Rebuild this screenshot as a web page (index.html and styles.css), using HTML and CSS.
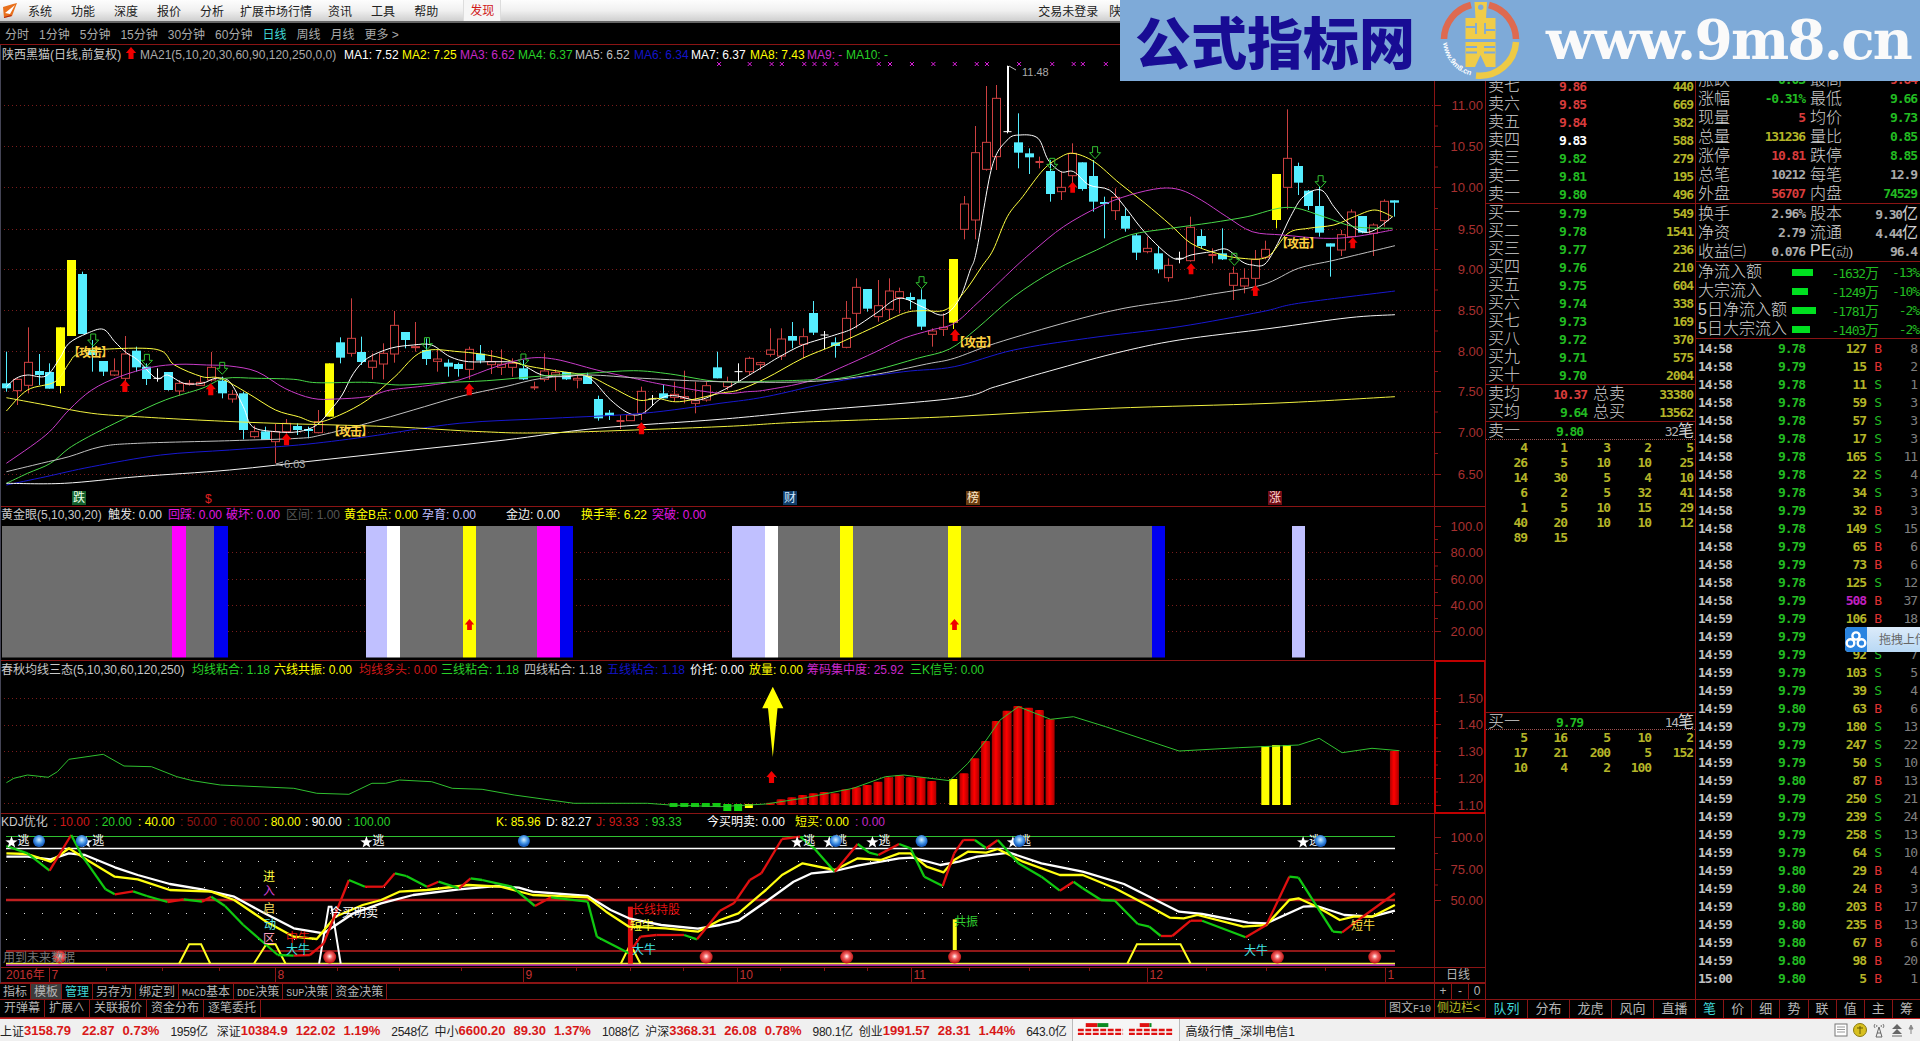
FILE: index.html
```html
<!DOCTYPE html>
<html lang="zh-CN">
<head>
    <meta charset="UTF-8">
    <title>陕西黑猫 日线</title>
    <link rel="stylesheet" href="styles.css">
</head>
<body>
    <div class="menubar">
        <svg class="app-logo" width="16" height="17" viewBox="0 0 16 17">
            <path d="M1 5 L11 2 L15 1 L13 6 L10 14 L2 16 Z" fill="#e8701c"/>
            <path d="M3 11 L13 3 L8 12 Z" fill="#fff"/>
            <path d="M2 15 L9 13 L10 14 L2 16 Z" fill="#b02810"/>
        </svg>
        <nav class="menu">
            <span>系统</span><span>功能</span><span>深度</span><span>报价</span><span>分析</span>
            <span class="wide">扩展市场行情</span><span>资讯</span><span>工具</span><span>帮助</span>
        </nav>
        <span class="discover">发现</span>
        <span class="login">交易未登录</span>
        <span class="stock">陕西黑猫</span>
    </div>

    <div class="periods">
        <span>分时</span><span>1分钟</span><span>5分钟</span><span>15分钟</span><span>30分钟</span><span>60分钟</span>
        <span class="on">日线</span><span>周线</span><span>月线</span><span>更多 &gt;</span>
    </div>

    <div class="workspace">
        <div class="left">
            <svg id="chart" width="1485" height="938" viewBox="0 45 1485 938"></svg>
            <div class="tabrow one">
                <span>指标</span><span class="sel">模板</span><span class="cy">管理</span><span>另存为</span><span>绑定到</span>
                <span><i>MACD</i>基本</span><span><i>DDE</i>决策</span><span><i>SUP</i>决策</span><span>资金决策</span>
                <div class="zoom"><span>+</span><span>-</span><span>0</span></div>
            </div>
            <div class="tabrow two">
                <span>开弹幕</span><span>扩展∧</span><span>关联报价</span><span>资金分布</span><span>逐笔委托</span>
                <div class="side"><span>图文<i>F10</i></span><span class="yl">侧边栏&lt;</span></div>
            </div>
        </div>

        <div class="book">
            <div id="asks" class="levels asks"></div>
            <div id="bids" class="levels"></div>
            <div class="levels avg">
                <div class="avg-row"><b>卖均</b><em class="red">10.37</em><b class="tail">总卖</b><em class="yel">33380</em></div>
                <div class="avg-row"><b>买均</b><em class="grn">9.64</em><b class="tail">总买</b><em class="yel">13562</em></div>
            </div>
            <div class="queue-head"><b>卖一</b><em class="grn">9.80</em><span>32<b>笔</b></span></div>
            <div id="sellq" class="queue"></div>
            <div class="queue-head lined"><b>买一</b><em class="grn">9.79</em><span>14<b>笔</b></span></div>
            <div id="buyq" class="queue"></div>
            <div class="tabrow bottom five">
                <span class="cy">队列</span><span>分布</span><span>龙虎</span><span>风向</span><span>直播</span>
            </div>
        </div>

        <div class="quote">
            <div id="q1" class="qblock first"></div>
            <div id="q2" class="qblock"></div>
            <div id="flows" class="qblock"></div>
            <div id="ticks"></div>
            <div class="tabrow bottom eight">
                <span class="cy">笔</span><span>价</span><span>细</span><span>势</span><span>联</span><span>值</span><span>主</span><span>筹</span>
            </div>
        </div>
    </div>

    <div class="statusbar">
        <div class="idx"><b>上证</b><em>3158.79</em><em>22.87</em><em>0.73%</em><span>1959亿</span></div>
        <div class="idx"><b>深证</b><em>10384.9</em><em>122.02</em><em>1.19%</em><span>2548亿</span></div>
        <div class="idx"><b>中小</b><em>6600.20</em><em>89.30</em><em>1.37%</em><span>1088亿</span></div>
        <div class="idx"><b>沪深</b><em>3368.31</em><em>26.08</em><em>0.78%</em><span>980.1亿</span></div>
        <div class="idx"><b>创业</b><em>1991.57</em><em>28.31</em><em>1.44%</em><span>643.0亿</span></div>
        <svg class="breadth" width="108" height="20" viewBox="0 0 108 20">
            <rect x="13" y="3" width="12" height="4" fill="#e01010"/>
            <rect x="25" y="3" width="11" height="4" fill="#0a8a20"/>
            <rect x="68" y="3" width="10" height="4" fill="#e01010"/>
            <rect x="78" y="3" width="2" height="4" fill="#0a8a20"/>
            <path d="M5 10 H51 M5 14 H51 M57 10 H102 M57 14 H102" stroke="#e01010" stroke-width="2.4" stroke-dasharray="6 1.6"/>
        </svg>
        <span class="server">高级行情_深圳电信1</span>
        <div class="tray">
            <svg width="14" height="14" viewBox="0 0 14 14"><rect x="1" y="1" width="12" height="12" fill="#fff" stroke="#777"/><path d="M3 4 H11 M3 6.5 H11 M3 9 H11" stroke="#999"/></svg>
            <svg width="14" height="14" viewBox="0 0 14 14"><circle cx="7" cy="7" r="6.5" fill="#d8c020" stroke="#8a7a10"/><path d="M4 5 H10 M7 3 V11" stroke="#665a00"/></svg>
            <svg width="14" height="16" viewBox="0 0 14 16"><path d="M7 5 L4 15 H10 Z M5 11 H9" fill="none" stroke="#666"/><path d="M3 2 Q1 4 3 6 M11 2 Q13 4 11 6 M5 3 Q4 4 5 5 M9 3 Q10 4 9 5" fill="none" stroke="#777"/></svg>
            <svg width="12" height="14" viewBox="0 0 12 14"><path d="M6 1 L11 6 H1 Z M6 6 L11 11 H1 Z" fill="#666"/><path d="M1 13 H11" stroke="#666"/></svg>
            <svg width="6" height="12" viewBox="0 0 6 12"><path d="M3 1 L5 5 H1 Z M3 5 V10" fill="#888" stroke="#888"/></svg>
        </div>
    </div>

    <!-- site banner over the top right corner -->
    <div class="banner">
        <span class="banner-title">公式指标网</span>
        <svg class="banner-logo" width="110" height="81" viewBox="0 0 110 81">
            <defs><path id="rim" d="M13 43 A37 37 0 0 0 41 75.5"/></defs>
            <path d="M14 39 A36 36 0 0 1 41 5 M59 5 A36 36 0 0 1 86 39" fill="none" stroke="#de6a50" stroke-width="6.5"/>
            <path d="M86 42 A36 36 0 0 1 46 75.5" fill="none" stroke="#eeca45" stroke-width="6.5"/>
            <text class="rim-text"><textPath href="#rim">www.9m8.cn</textPath></text>
            <path d="M44.5 2 H57 L56 18 H65.5 V39 H35.5 V18 H45.5 Z M35.5 42 H65.5 V67 H56 L50.5 55 L45 67 H35.5 Z" fill="#f0cc48"/>
            <circle cx="50.7" cy="7.3" r="2.7" fill="#7eaad8"/>
            <path d="M36 27 H46 M55 30 H65 M46 23 V34 M55 23 V34 M36 47 H47 M54 47 H65 M36 52.5 H47 M54 52.5 H65" stroke="#7eaad8" stroke-width="1.8"/>
        </svg>
        <span class="banner-url">www.9m8.cn</span>
    </div>

    <!-- upload helper docked on the screen edge -->
    <div class="dock">
        <div class="dock-icon">
            <svg width="22" height="18" viewBox="0 0 22 18">
                <circle cx="11" cy="5" r="3.6" fill="none" stroke="#fff" stroke-width="2.4"/>
                <circle cx="5.5" cy="12" r="3.8" fill="none" stroke="#fff" stroke-width="2.4"/>
                <circle cx="16.5" cy="12" r="3.8" fill="none" stroke="#fff" stroke-width="2.4"/>
            </svg>
        </div>
        <span>拖拽上传</span>
    </div>

    <script src="script.js"></script>
</body>
</html>
```

FILE: styles.css
```css
* { box-sizing: border-box; }
html, body {
    margin: 0;
    width: 1920px;
    height: 1041px;
    overflow: hidden;
    background: #000;
    color: #c8c8c8;
    font-family: "Liberation Sans", "Noto Sans CJK SC", sans-serif;
    font-size: 12px;
}
body { position: relative; }
em, i { font-style: normal; }
b { font-weight: normal; }

/* top menu */
.menubar {
    height: 23px;
    display: flex;
    align-items: center;
    color: #222;
    background: linear-gradient(#fdfdfd, #f0f0f0 50%, #cfcfcf);
    border-bottom: 2px solid #666;
}
.app-logo { margin: 0 10px 0 2px; }
.menu { display: flex; gap: 19px; }
.menu .wide { margin: 0 -3px; }
.discover {
    margin-left: 25px;
    height: 21px;
    line-height: 22px;
    padding: 0 6px;
    color: #d01818;
    background: #f6f6f6;
    border: 1px solid #ddd;
    border-width: 0 1px;
}
.login { margin-left: 537px; }
.stock { margin-left: 11px; }

.periods {
    height: 22px;
    display: flex;
    align-items: center;
    gap: 10px;
    padding-left: 5px;
    color: #aaa;
    border-bottom: 1px solid #8a1414;
}
.periods .on { color: #40d8d8; }

.workspace { height: 973px; display: flex; }
.left { width: 1485px; }
#chart { display: block; }
#chart text { font-size: 12px; }
#chart .axis { font-size: 13px; text-anchor: end; fill: #a83030; }
#chart .low { font-size: 11px; fill: #aaa; }
#chart .attack { fill: #ffd040; font-weight: bold; letter-spacing: -1px; }

/* tabs */
.tabrow {
    display: flex;
    align-items: stretch;
    color: #b4b4b4;
    border-bottom: 1px solid #8a1414;
}
.tabrow > span {
    padding: 0 3px;
    border-right: 1px solid #8a1414;
    line-height: 16px;
    white-space: nowrap;
}
.tabrow i { font-family: "Liberation Mono", monospace; font-size: 10px; }
.tabrow .sel { background: #3c3c3c; }
.tabrow .cy { color: #40d8d8; }
.tabrow.one { height: 17px; border-top: 1px solid #8a1414; }
.tabrow.two { height: 18px; }
.tabrow.two > span { padding: 0 4px; }
.zoom, .side { margin-left: auto; display: flex; }
.zoom { width: 51px; border-left: 1px solid #8a1414; }
.zoom span { flex: 1; text-align: center; line-height: 15px; border-right: 1px solid #8a1414; }
.zoom span:last-child { border: 0; }
.side span { padding: 0 3px; line-height: 17px; border-left: 1px solid #8a1414; }
.side .yl { width: 51px; padding: 0 0 0 2px; color: #b8b820; white-space: nowrap; overflow: hidden; }
.tabrow.bottom {
    margin-top: auto;
    height: 19px;
    border-top: 1px solid #8a1414;
    border-bottom: 0;
}
.tabrow.bottom > span { flex: 1; padding: 0; text-align: center; line-height: 17px; font-size: 13px; }
.tabrow.bottom > span:last-child { border-right: 0; }

/* order book */
.book {
    width: 211px;
    display: flex;
    flex-direction: column;
    border-left: 1px solid #8a1414;
    border-right: 1px solid #8a1414;
}
.levels { border-bottom: 1px solid #8a1414; }
.asks { padding-top: 32px; }
.level {
    height: 18px;
    display: grid;
    grid-template-columns: 71px 40px 1fr;
    align-items: center;
    padding: 0 2px;
}
.level b, .avg-row b, .queue-head b, .qrow b, .flow b { font-size: 16px; line-height: 18px; }
.level b, .avg-row b, .queue-head b, .qrow b, .flow b { color: #d0d0d0; font-weight: 300; white-space: nowrap; }
em, .queue span, .queue-head span, .tick span {
    font-family: "DejaVu Sans Mono", monospace;
    font-size: 13px;
    letter-spacing: -1.1px;
    font-weight: bold;
}
.level em:last-child { text-align: right; }
.red { color: #d83c3c; }
.wht { color: #fff; }
.grn { color: #22bb22; }
.yel { color: #b4b428; }
.gry { color: #aaa; }
.avg-row {
    height: 18px;
    display: grid;
    grid-template-columns: 53px 46px 48px 1fr;
    align-items: center;
    padding: 0 2px;
}
.avg-row em { text-align: right; }
.avg-row .tail { padding-left: 6px; }
.queue-head {
    height: 18px;
    display: grid;
    grid-template-columns: 68px 40px 1fr;
    align-items: center;
    padding: 0 2px;
    border-bottom: 1px dotted #a05050;
}
.queue-head span { text-align: right; color: #b4b4b4; font-weight: normal; }
.queue-head.lined { margin-top: 167px; border-top: 1px solid #8a1414; height: 18px; }
.queue-row {
    height: 15px;
    display: grid;
    grid-template-columns: 41px 40px 43px 41px 42px;
    align-items: center;
}
.queue-row span { text-align: right; color: #b4b428; }

/* quote column */
.quote { width: 224px; display: flex; flex-direction: column; }
.qblock { border-bottom: 1px solid #8a1414; }
.qblock.first { padding-top: 25px; }
.qrow {
    height: 19px;
    display: grid;
    grid-template-columns: 109px 1fr;
    align-items: center;
}
.qcell { display: flex; justify-content: space-between; align-items: center; padding: 0 0 0 2px; }
.qrow .qcell:last-child { padding: 0 3px 0 5px; }
.qrow small { font-size: 13px; }
.flow {
    height: 19px;
    display: grid;
    grid-template-columns: 94px 30px 56px 41px;
    align-items: center;
    padding-left: 2px;
}
.flow em { text-align: right; color: #22bb22; font-weight: normal; white-space: nowrap; }
.flow em small { font-family: "Noto Sans CJK SC", sans-serif; font-size: 14px; }
.flow .bar { height: 7px; background: #00e020; }
.tick {
    height: 18px;
    display: grid;
    grid-template-columns: 45px 62px 61px 15px 1fr;
    align-items: center;
    padding: 0 3px 0 2px;
}
.tick span { text-align: right; }
.tick .t { text-align: left; color: #c0c0c0; }
.tick .p { color: #22bb22; }
.tick .v { color: #b4b428; }
.tick .big-order { color: #c020c0; }
.tick .s { text-align: right; }
.tick .B { color: #e03232; font-weight: normal; }
.tick .S { color: #22bb22; font-weight: normal; }
.tick .n { color: #808080; font-weight: normal; }

/* status bar */
.statusbar {
    height: 23px;
    display: flex;
    align-items: center;
    color: #222;
    background: #f0f0f0;
    border-top: 1px solid #c02020;
    white-space: nowrap;
}
.idx { display: flex; align-items: center; gap: 8px; margin-right: 6px; }
.idx:first-child { margin-right: 9px; }
.idx:first-child em:first-of-type { margin-right: 3px; }
.idx b { margin-right: -8px; }
.idx em {
    font-family: "Liberation Sans", sans-serif;
    font-size: 13px;
    letter-spacing: 0;
    color: #d81818;
}
.idx span { font-size: 12px; margin-left: 3px; letter-spacing: -0.3px; }
.breadth { border: 1px solid #bbb; border-width: 0 1px; background: #f6f6f6; height: 22px; }
.server { margin-left: 5px; }
.tray { margin-left: auto; display: flex; align-items: center; gap: 5px; padding-right: 6px; }

/* banner */
.banner {
    position: absolute;
    top: 0;
    right: 0;
    width: 800px;
    height: 81px;
    background: #7eaad8;
    overflow: hidden;
}
.banner-title {
    position: absolute;
    left: 15px;
    top: 0;
    font: 900 56px/80px "Noto Sans CJK SC", sans-serif;
    color: #180c94;
    white-space: nowrap;
}
.banner-logo { position: absolute; left: 310px; top: 0; }
.rim-text { font-size: 7.5px; font-weight: bold; fill: #fff; font-family: "Liberation Sans", sans-serif; }
.banner-url {
    position: absolute;
    left: 426px;
    top: 0;
    font: bold 55px/80px "DejaVu Serif", serif;
    letter-spacing: -1.8px;
    color: #fafafa;
}

.dock {
    position: absolute;
    left: 1845px;
    top: 627px;
    width: 75px;
    height: 25px;
    display: flex;
    background: linear-gradient(#dcebfa, #b8d8f4);
    border-radius: 4px 0 0 4px;
    overflow: hidden;
}
.dock-icon {
    width: 30px;
    display: flex;
    align-items: center;
    justify-content: center;
    background: #2a84e0;
}
.dock span { padding: 0 0 0 12px; line-height: 27px; color: #666; white-space: nowrap; }
```

FILE: script.js
```js
// chart + quote panels, everything is drawn from the tables below
var out = [];

var RED = '#cc4040', CYAN = '#55eeff', YEL = '#ffff00', MAG = '#ff00ff';
var LINE = '#8a1414';

function X(i) { return 6.4 + 10.76 * i; }

function rect(x, y, w, h, c, extra) {
    out.push('<rect x="' + x + '" y="' + y + '" width="' + w + '" height="' + h + '" fill="' + c + '" ' + (extra || '') + '/>');
}
function hline(x1, x2, y, c, w, dash) {
    out.push('<path d="M' + x1 + ' ' + y + 'H' + x2 + '" stroke="' + c + '" stroke-width="' + (w || 1) + '"' +
        (dash ? ' stroke-dasharray="' + dash + '"' : '') + '/>');
}
function vline(x, y1, y2, c, w) {
    out.push('<path d="M' + x + ' ' + y1 + 'V' + y2 + '" stroke="' + c + '" stroke-width="' + (w || 1) + '"/>');
}
function text(x, y, c, s, cls) {
    out.push('<text x="' + x + '" y="' + y + '" fill="' + c + '" dominant-baseline="central"' +
        (cls ? ' class="' + cls + '"' : '') + '>' + s + '</text>');
}

// the point lists were read off crops, so each has its own origin and scale
function conv(list, ox, fx, oy) {
    var r = [];
    for (var i = 0; i < list.length; i += 2) r.push([ox + list[i] / fx, oy + list[i + 1] / 3]);
    return r;
}
function smooth(p, c, w) {
    var d = 'M' + p[0][0].toFixed(1) + ' ' + p[0][1].toFixed(1);
    for (var i = 0; i < p.length - 1; i++) {
        var a = p[Math.max(i - 1, 0)], b = p[i], e = p[i + 1], f = p[Math.min(i + 2, p.length - 1)];
        d += 'C' + (b[0] + (e[0] - a[0]) / 6).toFixed(1) + ' ' + (b[1] + (e[1] - a[1]) / 6).toFixed(1) + ' ' +
            (e[0] - (f[0] - b[0]) / 6).toFixed(1) + ' ' + (e[1] - (f[1] - b[1]) / 6).toFixed(1) + ' ' +
            e[0].toFixed(1) + ' ' + e[1].toFixed(1);
    }
    out.push('<path d="' + d + '" fill="none" stroke="' + c + '" stroke-width="' + w + '"/>');
}
function poly(p, c, w) {
    var s = p.map(function (q) { return q[0].toFixed(1) + ',' + q[1].toFixed(1); }).join(' ');
    out.push('<polyline points="' + s + '" fill="none" stroke="' + c + '" stroke-width="' + w + '" stroke-linejoin="round"/>');
}

out.push('<defs>' +
    '<linearGradient id="bar-red"><stop offset="0" stop-color="#b00000"/><stop offset=".45" stop-color="#ff0000"/><stop offset="1" stop-color="#a80000"/></linearGradient>' +
    '<radialGradient id="ball-blue" cx=".5" cy=".4"><stop offset="0" stop-color="#d8f0ff"/><stop offset=".6" stop-color="#4a9ae8"/><stop offset="1" stop-color="#1a60c0"/></radialGradient>' +
    '<radialGradient id="ball-red" cx=".5" cy=".45"><stop offset="0" stop-color="#ffffff"/><stop offset=".45" stop-color="#f06060"/><stop offset="1" stop-color="#c01818"/></radialGradient>' +
    '</defs>');

// ---- frame ----
[105, 146, 187, 229, 269, 310, 351, 391, 432, 474].forEach(function (y) { hline(0, 1434, y + .5, '#7a1c1c', 1, '1 3'); });
[552, 579, 605, 631].forEach(function (y) { hline(0, 1434, y + .5, '#7a1c1c', 1, '1 3'); });
[698, 725, 751, 777, 803].forEach(function (y) { hline(0, 1434, y + .5, '#7a1c1c', 1, '1 3'); });
[506.5, 660.5, 813.5, 967.5].forEach(function (y) { hline(0, 1485, y, LINE); });
hline(0, 1485, 982.5, LINE);
vline(.5, 45, 983, '#445');
vline(1434.5, 45, 983, LINE);

// ---- titles ----
[
    [2, 55, '#c8c8c8', '陕西黑猫(日线,前复权)'], [140, 55, '#aaa', 'MA21(5,10,20,30,60,90,120,250,0,0)'],
    [344, 55, '#fff', 'MA1: 7.52'], [402, 55, '#ff0', 'MA2: 7.25'], [460, 55, '#c828c8', 'MA3: 6.62'], [518, 55, '#28d028', 'MA4: 6.37'],
    [575, 55, '#c0c0c0', 'MA5: 6.52'], [634, 55, '#1414c8', 'MA6: 6.34'], [691, 55, '#fff', 'MA7: 6.37'], [750, 55, '#ff0', 'MA8: 7.43'],
    [807, 55, '#c828c8', 'MA9: -'], [846, 55, '#28d028', 'MA10: -'],

    [1, 515, '#c8c8c8', '黄金眼(5,10,30,20)'], [108, 515, '#e0e0e0', '触发: 0.00'], [168, 515, '#e018e0', '回踩: 0.00'], [226, 515, '#e018e0', '破坏: 0.00'],
    [286, 515, '#555', '区间: 1.00'], [344, 515, '#ff0', '黄金B点: 0.00'], [422, 515, '#c0c0ff', '孕育: 0.00'], [506, 515, '#f0f0f0', '金边: 0.00'],
    [581, 515, '#ff0', '换手率: 6.22'], [652, 515, '#e018e0', '突破: 0.00'],

    [1, 670, '#c8c8c8', '春秋均线三态(5,10,30,60,120,250)'], [192, 670, '#28d028', '均线粘合: 1.18'], [274, 670, '#ff0', '六线共振: 0.00'], [359, 670, '#d01818', '均线多头: 0.00'],
    [441, 670, '#28d028', '三线粘合: 1.18'], [524, 670, '#c0c0c0', '四线粘合: 1.18'], [607, 670, '#1414c8', '五线粘合: 1.18'], [690, 670, '#fff', '价托: 0.00'],
    [749, 670, '#ff0', '放量: 0.00'], [807, 670, '#c828c8', '筹码集中度: 25.92'], [910, 670, '#28d028', '三K信号: 0.00'],

    [1, 822, '#c8c8c8', 'KDJ优化'], [53, 822, '#d01818', ': 10.00'], [95, 822, '#28d028', ': 20.00'], [138, 822, '#ff0', ': 40.00'], [180, 822, '#901414', ': 50.00'],
    [223, 822, '#901414', ': 60.00'], [264, 822, '#ff0', ': 80.00'], [305, 822, '#fff', ': 90.00'], [347, 822, '#28d028', ': 100.00'],
    [496, 822, '#ff0', 'K: 85.96'], [546, 822, '#fff', 'D: 82.27'], [596, 822, '#d01818', 'J: 93.33'], [645, 822, '#28d028', ': 93.33'],
    [707, 822, '#fff', '今买明卖: 0.00'], [795, 822, '#ff0', '短买: 0.00'], [855, 822, '#c828c8', ': 0.00']
].forEach(function (t) { text(t[0], t[1], t[2], t[3]); });

// ---- axis ----
function axis(rows) {
    rows.forEach(function (r, i) {
        text(1483, r[0], '', r[1], 'axis');
        hline(1434, 1441, r[0] + .5, LINE);
        if (rows[i + 1]) hline(1434, 1438, (r[0] + rows[i + 1][0]) / 2 + .5, LINE);
    });
}
axis([[105, '11.00'], [146, '10.50'], [187, '10.00'], [229, '9.50'], [269, '9.00'], [310, '8.50'], [351, '8.00'], [391, '7.50'], [432, '7.00'], [474, '6.50']]);
axis([[526, '100.0'], [552, '80.00'], [579, '60.00'], [605, '40.00'], [631, '20.00']]);
axis([[698, '1.50'], [724, '1.40'], [751, '1.30'], [778, '1.20'], [805, '1.10']]);
axis([[837, '100.0'], [869, '75.00'], [900, '50.00']]);
out.push('<rect x="1435" y="661" width="50" height="152" fill="none" stroke="#c00000" stroke-width="2"/>');
text(1446, 975, '#b4b4b4', '日线');

// ---- candles: [high, body top, body bottom, low, kind], y in crop px ----
var c1 = [
    [305,400,415,425,'c'],[385,388,422,465,'r'],[232,337,406,430,'r'],[312,363,375,405,'c'],[340,366,416,416,'c'],
    [232,232,408,430,'y'],[30,30,258,258,'y'],[65,72,252,252,'c'],[270,300,315,365,'c'],[333,333,365,378,'c'],
    [325,363,375,378,'r'],[258,312,385,410,'r'],[290,302,352,365,'c'],[340,350,387,405,'c'],[355,385,386,395,'w'],
    [366,366,420,422,'c'],[390,400,423,437,'r'],[390,400,403,407,'r'],[378,397,406,408,'r'],[306,352,390,395,'r'],
    [380,392,430,445,'c'],[420,433,447,458,'r'],[425,430,540,568,'c'],[527,545,560,565,'r'],[530,544,570,570,'c'],
    [520,545,575,640,'r'],[507,520,545,550,'r'],[520,528,540,555,'c'],[530,537,543,565,'c'],[480,515,548,550,'r'],
    [340,340,500,500,'y'],[262,277,323,340,'c'],[145,265,310,320,'r'],[260,306,336,345,'c'],[310,333,352,388,'r'],
    [280,310,342,388,'r'],[183,226,312,338,'r'],[246,246,270,295,'c'],[216,290,293,305,'r'],[265,300,327,345,'c'],
    [300,327,334,365,'r'],[328,338,350,380,'c'],[338,342,357,380,'c'],[290,298,358,388,'r'],[285,311,332,340,'c'],
    [300,335,344,372,'r'],[298,343,352,375,'r'],[325,340,352,380,'r'],[330,355,388,390,'c'],[395,409,412,420,'s'],
    [310,363,388,395,'r'],[358,368,375,422,'r'],[366,366,388,390,'c'],[375,385,390,415,'r'],[368,378,402,402,'c'],
    [437,447,505,512,'c'],[480,488,498,510,'c'],[495,510,512,537,'s'],[490,495,512,512,'r'],[410,424,490,510,'r'],
    [435,447,448,465,'w'],[405,430,445,445,'c'],[395,433,442,455,'r'],[362,440,445,460,'r'],[395,452,460,490,'r'],
    [395,407,450,455,'r'],[305,352,385,385,'c'],[380,395,410,420,'r'],[340,365,366,398,'w'],[320,325,365,375,'r'],
    [335,338,344,360,'r'],[235,300,313,320,'r'],[235,267,318,330,'r'],[216,258,272,295,'c'],[235,260,283,325,'r'],
    [153,189,248,255,'c'],[243,255,256,297,'w'],[262,277,288,323,'c'],[153,205,292,295,'r'],[85,112,190,235,'r'],
    [117,117,176,185,'c'],[90,167,200,215,'r'],[85,123,178,210,'r'],[113,125,143,190,'r'],[128,141,150,178,'c'],
    [118,148,230,240,'c'],[235,243,253,290,'r'],[190,232,238,258,'r'],[27,27,218,237,'y']
];
var c2 = [
    [588,612,688,718,'r'],[378,458,660,718,'r'],[258,427,508,512,'r'],[255,295,470,510,'r'],[197,395,396,400,'w'],
    [340,427,458,505,'c'],[445,460,472,522,'c'],[470,483,487,505,'s'],[480,513,582,605,'c'],[515,562,575,600,'r'],
    [430,460,527,575,'r'],[487,487,567,572,'c'],[480,528,605,635,'c'],[590,606,610,715,'c'],[565,592,632,660,'r'],
    [625,648,686,695,'c'],[700,706,758,780,'c'],[710,745,755,760,'r'],[738,760,808,820,'c'],[775,796,833,845,'r'],
    [755,775,776,790,'w'],[650,682,782,785,'r'],[688,708,738,745,'c'],[745,762,766,790,'s'],[685,760,778,780,'c'],
    [800,820,856,900,'r'],[805,835,858,880,'r'],[750,778,835,860,'r'],[722,748,772,778,'r'],[522,522,660,685,'y'],
    [328,475,562,628,'r'],[488,498,548,585,'c'],[570,572,618,630,'c'],[560,618,698,710,'c'],[730,730,740,830,'c'],
    [690,704,750,768,'r'],[628,636,710,712,'r'],[648,648,698,700,'c'],[670,675,700,768,'r'],[598,604,662,680,'r'],
    [601,601,608,650,'c']
];
function candle(i, d, oy) {
    var x = Math.round(X(i)) + .5;
    var h = oy + d[0] / 3, t = oy + d[1] / 3, b = oy + d[2] / 3, l = oy + d[3] / 3, k = d[4];
    var col = k === 'r' || k === 's' ? RED : k === 'c' ? CYAN : k === 'y' ? YEL : '#fff';
    vline(x, h, l, col);
    if (k === 'r') rect(x - 4, t, 8, b - t, '#000', 'stroke="' + RED + '"');
    else if (k === 's') rect(x - 4, t, 8, Math.max(b - t, 2), RED);
    else if (k === 'c') rect(x - 4.5, t, 9, Math.max(b - t, 2), CYAN);
    else if (k === 'y') rect(x - 4.5, t, 9, b - t, YEL);
    else hline(x - 4, x + 4, t, col);
}
c1.forEach(function (d, i) { candle(i, d, 250); });
c2.forEach(function (d, i) { candle(i + 89, d, 0); });

// ---- moving averages ----
var ma = [
    ['#ffffff',
        [14,410,35,385,60,375,100,378,130,325,150,280,190,250,225,238,250,275,275,308,300,330,340,385,365,375,400,400,440,400,470,385,500,395,530,470,550,530,600,545,650,545,690,525,720,480,745,435,770,370,800,325,850,295,900,285,940,285,980,320,1020,335,1080,335,1130,340,1180,375,1230,380,1280,380,1330,450,1370,490,1400,490,1440,445,1470,437,1520,450],
        [0,425,40,395,100,345,130,320,180,285,250,255,290,235,340,190,390,145,440,170,485,195,520,150,545,60],
        [660,750,690,500,720,420,745,405,780,415,800,480,825,515,850,515,880,555,920,570,950,620,980,680,1010,730,1040,770,1058,778,1080,765,1120,755,1150,748,1180,785,1200,795,1225,792,1250,730,1275,650,1300,590,1335,570,1360,620,1385,665,1415,695,1440,690,1475,650]],
    ['#ffff40',
        [14,483,60,420,120,395,150,340,165,315,200,300,340,298,380,345,440,380,480,385,540,430,600,480,650,500,690,517,740,495,800,450,860,380,920,305,1000,305,1080,320,1140,345,1200,360,1280,378,1330,410,1390,450,1430,445,1480,455],
        [0,430,40,420,100,385,180,325,250,285,330,235,400,190,440,182,490,180,530,130,570,50],
        [692,750,720,650,750,590,790,510,820,475,848,460,890,485,940,550,990,610,1040,675,1080,730,1130,760,1180,775,1230,770,1270,700,1310,685,1360,675,1400,650,1440,630,1475,650]],
    ['#c83cc8',
        [14,640,100,555,150,480,200,420,260,380,330,352,390,343,450,345,500,348,560,365,620,415,680,445,730,447,800,440,850,420,930,407,1000,390,1080,350,1150,325,1210,328,1300,360,1380,385,1450,405],
        [0,430,60,425,100,420,190,395,260,355,340,305,400,265,460,240,510,220,560,160,640,55],
        [773,750,830,680,900,620,960,585,1020,565,1060,570,1100,600,1150,650,1200,695,1260,705,1340,715,1400,710,1475,690]],
    ['#48d848',
        [14,700,60,670,110,640,150,595,200,555,280,500,360,450,440,415,490,385,560,385,640,388,690,398,800,397,870,405,960,398,1060,392,1180,378,1280,370,1380,362,1460,372],
        [0,395,120,393,190,390,260,385,340,360,430,325,500,297,560,235,640,140,730,60],
        [895,750,960,705,1040,685,1120,668,1190,650,1270,622,1340,650,1400,680,1475,685]],
    ['#c0c0c0',
        [14,665,90,640,150,620,220,590,300,580,500,572,650,565,700,555,800,520,900,480,1000,440,1100,410,1180,385,1280,375,1400,385],
        [0,395,190,395,330,375,450,342,510,325,600,280,760,215,880,175,1000,150,1060,135,1180,105,1260,55,1340,30,1470,-13], []],
    ['#1818d0',
        [14,705,100,680,200,650,350,615,500,600,650,585,800,560,1000,520,1200,505,1400,490],
        [0,460,100,440,250,395,400,365,510,350,640,300,800,265,1000,230,1180,185,1260,160,1470,123], []],
    ['#f4f4f4',
        [14,700,140,700,300,680,500,660,700,630,900,600,1100,570,1300,535],
        [0,508,200,482,510,445,600,410,700,370,860,310,1000,270,1200,235,1370,203,1470,194], []],
    ['#f0f040',
        [14,443,100,465,200,490,300,500,430,510,600,520,850,530,1050,545,1200,548],
        [0,530,170,517,500,500,850,475,1200,460,1470,440], []]
];
ma.forEach(function (m) {
    smooth(conv(m[1], 0, 2.178, 250).concat(conv(m[2], 720, 2.178, 250), conv(m[3], 640, 1.96, 0)), m[0], 1);
});

// ---- arrows and marks ----
function upArrow(x, y, h) {
    var s = h / 14;
    out.push('<path d="M' + x + ' ' + y + 'l' + 6 * s + ' ' + 7 * s + 'h' + -3 * s + 'v' + 7 * s + 'h' + -6 * s + 'v' + -7 * s + 'h' + -3 * s + 'z" fill="#f00000"/>');
}
function downHollow(x, y) {
    out.push('<path d="M' + (x - 2.5) + ' ' + y + 'h5v6h3l-5.5 6 -5.5 -6h3z" fill="none" stroke="#30c030"/>');
}
[[272,390],[459,400],[624,550],[1022,400],[1397,517]].forEach(function (a) { upArrow(a[0] / 2.178, 250 + a[1] / 3, 12); });
upArrow(720 + 512 / 2.178, 250 + 237 / 3, 12);
[[848,545],[1080,790],[1206,855],[1397,712]].forEach(function (a) { upArrow(640 + a[0] / 1.96, a[1] / 3, 11); });
upArrow(131, 47, 12);

[[203,252],[320,313],[484,337],[930,263],[1140,312]].forEach(function (a) { downHollow(a[0] / 2.178, 250 + a[1] / 3); });
downHollow(720 + 439 / 2.178, 250 + 80 / 3);
[[808,475],[892,440],[1165,760],[1334,527]].forEach(function (a) { downHollow(640 + a[0] / 1.96, a[1] / 3); });

[155,215,258,278,322,342,362,385,468,490,533,575,617,660,680,743,808,850,868,913].forEach(function (z) {
    var x = 640 + z / 1.96;
    out.push('<path d="M' + (x - 2) + ' 62l4 4m0 -4l-4 4" stroke="#e020e0"/>');
});
[[68,353],[328,432],[953,343],[1276,244]].forEach(function (a) { text(a[0], a[1], '', '【攻击】', 'attack'); });

vline(1008.5, 66, 132, '#fff');
out.push('<path d="M1009 66l7 4" stroke="#bbb"/>');
text(1022, 72, '', '11.48', 'low');
out.push('<path d="M276 464l7 -2m-7 2l7 2" stroke="#aaa"/>');
text(284, 464, '', '6.03', 'low');

function tag(x, s, bg, c) {
    rect(x - 7, 491, 14, 14, bg);
    text(x - 6, 498, c, s);
}
tag(79, '跌', '#14602c', '#e8ffe8');
text(205, 499, '#e02020', '$');
tag(790, '财', '#103c68', '#cfe6ff');
tag(973, '榜', '#6a3c10', '#ffe8c8');
tag(1275, '涨', '#700c14', '#ffd8d8');

// ---- strip panel ----
[
    [2,172,'#6e6e6e'],[172,186,MAG],[186,214,'#6e6e6e'],[214,228,'#0000f0'],
    [366,387,'#c0c0ff'],[387,400,'#fff'],[400,463,'#6e6e6e'],[463,476,YEL],[476,537,'#6e6e6e'],[537,560,MAG],[560,573,'#0000f0'],
    [732,765,'#c0c0ff'],[765,778,'#fff'],[778,840,'#6e6e6e'],[840,853,YEL],[853,948,'#6e6e6e'],[948,961,YEL],[961,1152,'#6e6e6e'],[1152,1165,'#0000f0'],
    [1292,1305,'#c0c0ff']
].forEach(function (s) { rect(s[0], 526, s[1] - s[0], 131.5, s[2]); });
upArrow(469.5, 619, 11);
upArrow(954.5, 619, 11);

// ---- ratio panel ----
var base = 660 + 435 / 3;
[[67,432,'#10d810'],[68,432,'#10d810']].forEach(function (b) {
    rect(X(b[0]) - 4, 660 + b[1] / 3, 8, base + 6 - 660 - b[1] / 3, b[2]);
});
[62,63,64,65,66].forEach(function (i) { rect(X(i) - 4, base - 2, 8, 4, '#10c810'); });
rect(X(69) - 4, 660 + 432 / 3, 8, 4, YEL);
var tops = {71:428,72:418,73:412,74:405,75:400,76:396,77:400,78:388,79:382,80:375,81:365,82:352,83:345,84:352,85:352,86:363,
    89:340,90:295,91:243,92:183,93:152,94:138,95:143,96:150,97:178,129:272};
Object.keys(tops).forEach(function (i) {
    var t = 660 + tops[i] / 3;
    rect(X(+i) - 4.5, t, 9, base - t, 'url(#bar-red)', 'rx="1"');
});
[[88,357],[117,258],[118,255],[119,255]].forEach(function (b) {
    var t = 660 + b[1] / 3;
    rect(X(b[0]) - 4, t, 8, base - t, YEL);
});
poly(conv([14,368,30,355,60,345,105,352,125,335,150,298,225,283,270,318,330,320,385,350,420,362,480,375,640,385,690,400,760,403,810,370,840,370,870,360,940,365,985,385,1050,388,1120,405,1250,430,1410,430,1460,435], 0, 2.178, 660)
    .concat(conv([0,440,100,432,180,415,290,385,360,350,400,345,500,362,540,310,580,240,610,180,650,140,720,178,770,170,840,200,1000,273,1130,263,1260,255,1305,235,1355,278,1420,265,1480,272], 720, 2.178, 660)), '#30c030', 1);
// big arrow
out.push('<path d="M772.8 686.7L762.2 708.3H768L772.8 757L777.5 708.3H783.4Z" fill="#ffff00"/>');
upArrow(771.5, 771, 12);

// ---- kdj panel ----
hline(6, 1395, 836.5, '#30c030', 1.2);
hline(6, 1395, 848.5, '#fff', 1.4);
hline(6, 1395, 900, '#c02020', 2.4);
hline(6, 1395, 951, '#c02020', 1.4);
[861.5, 887.5, 913.5, 939.5].forEach(function (y) { hline(6, 1395, y, '#ddd', 1, '1 17'); });
hline(6, 1395, 965, '#a020a0', 2);
hline(6, 1395, 963.5, '#f0f040', 1.4);

function trap(pts, c) {
    out.push('<polyline points="' + pts + '" fill="none" stroke="' + c + '" stroke-width="2"/>');
}
function z6(x, y) { return (x / 2.178).toFixed(1) + ',' + (660 + y / 3).toFixed(1); }
function z7(x, y) { return (720 + x / 2.178).toFixed(1) + ',' + (660 + y / 3).toFixed(1); }
trap([z6(390,911), z6(412,853), z6(438,853), z6(458,911)].join(' '), '#ffff20');
trap([z6(553,911), z6(580,853), z6(600,853), z6(622,911)].join(' '), '#ffff20');
trap([z6(695,911), z6(716,740), z6(722,740), z6(742,911)].join(' '), '#fff');
trap([z6(1352,911), z6(1373,853), z6(1395,911)].join(' '), '#ffff20');
trap([z7(887,911), z7(908,853), z7(1003,853), z7(1025,911)].join(' '), '#ffff20');
rect(1373 / 2.178 - 2.5, 660 + 740 / 3, 5, 171 / 3, '#e01010');
rect(720 + 507 / 2.178, 660 + 778 / 3, 4, 92 / 3, '#ffff20');

var dLine = conv([14,590,60,590,110,598,150,580,185,585,250,622,300,645,370,672,440,688,510,710,570,755,640,805,705,820,770,760,830,730,900,705,1000,688,1080,678,1130,683,1160,695,1280,708,1330,750,1370,775,1440,795,1520,806], 0, 2.178, 660)
    .concat(conv([0,795,40,782,100,725,160,665,200,640,250,633,300,617,390,595,420,593,480,615,520,605,560,590,630,578,700,610,790,635,880,672,1000,755,1050,762,1150,788,1190,790,1270,740,1300,738,1360,765,1420,770,1470,752], 720, 2.178, 660));
var kLine = conv([14,580,60,582,110,605,150,565,190,600,250,650,300,658,370,690,460,695,510,720,580,785,640,830,690,837,730,770,790,735,830,720,870,695,930,690,1020,675,1090,680,1160,705,1280,712,1320,755,1370,800,1450,805,1520,815], 0, 2.178, 660)
    .concat(conv([0,780,40,760,100,690,135,645,180,610,250,630,300,595,350,600,390,580,415,580,450,620,487,637,510,600,540,575,580,578,605,567,660,605,740,645,790,645,860,685,930,735,980,773,1010,775,1040,765,1140,800,1190,795,1240,720,1260,715,1300,740,1350,780,1380,770,1420,770,1470,735], 720, 2.178, 660));
var jLine = conv([14,558,60,580,108,632,155,525,180,590,230,688,250,703,290,694,320,708,365,726,400,718,440,725,460,710,490,738,530,795,580,855,605,885,640,887,675,885,705,850,760,660,795,680,835,680,860,640,885,648,930,680,955,665,1000,685,1025,655,1050,660,1115,680,1165,738,1200,712,1280,725,1300,830,1370,880,1395,830,1430,825,1490,825,1518,838], 0, 2.178, 660)
    .concat(conv([0,752,30,730,65,660,90,640,135,537,175,530,205,565,250,635,300,552,325,578,345,585,390,552,415,565,445,650,485,678,510,580,530,540,555,540,580,565,605,540,650,610,700,650,740,692,770,665,790,685,830,720,860,722,910,792,935,800,960,828,985,828,1025,782,1050,782,1145,832,1190,795,1240,650,1260,653,1335,815,1355,817,1400,770,1470,700], 720, 2.178, 660));
poly(dLine, '#fff', 2.3);
poly(kLine, '#ffff10', 2.3);
for (var j = 0; j < jLine.length - 1; j++) {
    poly([jLine[j], jLine[j + 1]], jLine[j + 1][1] <= jLine[j][1] ? '#e01010' : '#10c810', 2.3);
}

function star(x, y) {
    var p = [];
    for (var i = 0; i < 10; i++) {
        var r = i % 2 ? 2.6 : 6.4, a = Math.PI * i / 5 - Math.PI / 2;
        p.push((x + r * Math.cos(a)).toFixed(1) + ',' + (y + r * Math.sin(a)).toFixed(1));
    }
    out.push('<polygon points="' + p.join(' ') + '" fill="#fff"/>');
}
[[25,547],[188,547],[798,547]].forEach(function (a) { star(a[0] / 2.178, 660 + a[1] / 3); text(a[0] / 2.178 + 6, 841, '#fff', '逃'); });
[[168,547],[238,547],[332,547],[638,547],[1270,547]].forEach(function (a) { star(720 + a[0] / 2.178, 660 + a[1] / 3); text(720 + a[0] / 2.178 + 6, 841, '#fff', '逃'); });
[85,178,1141].forEach(function (z) { out.push('<circle cx="' + z / 2.178 + '" cy="841" r="6" fill="url(#ball-blue)"/>'); });
[252,439,652,1308].forEach(function (z) { out.push('<circle cx="' + (720 + z / 2.178) + '" cy="841" r="6" fill="url(#ball-blue)"/>'); });
[130,718,1538].forEach(function (z) { out.push('<circle cx="' + z / 2.178 + '" cy="957" r="6.5" fill="url(#ball-red)"/>'); });
[276,511,1214,1426].forEach(function (z) { out.push('<circle cx="' + (720 + z / 2.178) + '" cy="957" r="6.5" fill="url(#ball-red)"/>'); });

[
    [263,877,'#ffff40','进'],[263,891,'#d040d0','入'],[263,909,'#ffe060','启'],[264,925,'#60e8e8','动'],[263,939,'#ffa0c0','区'],
    [286,938,'#e01010','中牛'],[286,950,'#40e0e0','大牛'],[330,913,'#fff','今买明卖'],[3,958,'#777','用到未来数据'],
    [632,910,'#e01010','长线持股'],[630,926,'#ffff40','短牛'],[632,950,'#40e0e0','大牛'],
    [954,922,'#30d030','共振'],[1244,951,'#40e0e0','大牛'],[1351,926,'#ffe040','短牛']
].forEach(function (t) { text(t[0], t[1], t[2], t[3]); });

// ---- date row ----
[107,230,352,477,600,733,868,1003,1140,1255,1373,1487].forEach(function (z) { vline(Math.round(z / 2.178) + .5, 968, 971, LINE); });
[36,131,227,320,415,543,673,803,930,1059,1190,1318,1448].forEach(function (z) { vline(Math.round(720 + z / 2.178) + .5, 968, 971, LINE); });
[[107,'7'],[600,'8'],[1140,'9']].forEach(function (d) { var x = Math.round(d[0] / 2.178) + .5; vline(x, 968, 982, LINE); text(x + 2, 975, '#c03030', d[1]); });
[[36,'10'],[415,'11'],[930,'12'],[1448,'1']].forEach(function (d) { var x = Math.round(720 + d[0] / 2.178) + .5; vline(x, 968, 982, LINE); text(x + 2, 975, '#c03030', d[1]); });
text(6, 975, '#c03030', '2016年');

document.getElementById('chart').innerHTML = out.join('');

// ---- right side panels ----
function fill(id, rows) { document.getElementById(id).innerHTML = rows.join(''); }

var askRows = [['卖七','9.86','red',440],['卖六','9.85','red',669],['卖五','9.84','red',382],['卖四','9.83','wht',588],['卖三','9.82','grn',279],['卖二','9.81','grn',195],['卖一','9.80','grn',496]];
var bidRows = [['买一','9.79',549],['买二','9.78',1541],['买三','9.77',236],['买四','9.76',210],['买五','9.75',604],['买六','9.74',338],['买七','9.73',169],['买八','9.72',370],['买九','9.71',575],['买十','9.70',2004]];
fill('asks', askRows.map(function (r) {
    return '<div class="level"><b>' + r[0] + '</b><em class="' + r[2] + '">' + r[1] + '</em><em class="yel">' + r[3] + '</em></div>';
}));
fill('bids', bidRows.map(function (r) {
    return '<div class="level"><b>' + r[0] + '</b><em class="grn">' + r[1] + '</em><em class="yel">' + r[2] + '</em></div>';
}));

function queue(rows) {
    return rows.map(function (r) {
        var s = '';
        for (var i = 0; i < 5; i++) s += '<span>' + (r[i] === undefined ? '' : r[i]) + '</span>';
        return '<div class="queue-row">' + s + '</div>';
    });
}
fill('sellq', queue([[4,1,3,2,5],[26,5,10,10,25],[14,30,5,4,10],[6,2,5,32,41],[1,5,10,15,29],[40,20,10,10,12],[89,15]]));
fill('buyq', queue([[5,16,5,10,2],[17,21,200,5,152],[10,4,2,100]]));

function qrow(a, av, ac, b, bv, bc) {
    return '<div class="qrow"><div class="qcell"><b>' + a + '</b><em class="' + ac + '">' + av + '</em></div>' +
        '<div class="qcell"><b>' + b + '</b><em class="' + bc + '">' + bv + '</em></div></div>';
}
fill('q1', [
    qrow('涨跌','-0.03','grn','最高','9.84','red'), qrow('涨幅','-0.31%','grn','最低','9.66','grn'), qrow('现量','5','red','均价','9.73','grn'),
    qrow('总量','131236','yel','量比','0.85','grn'), qrow('涨停','10.81','red','跌停','8.85','grn'), qrow('总笔','10212','gry','每笔','12.9','gry'),
    qrow('外盘','56707','red','内盘','74529','grn')
]);
fill('q2', [
    qrow('换手','2.96%','gry','股本','9.30<b>亿</b>','gry'), qrow('净资','2.79','gry','流通','4.44<b>亿</b>','gry'), qrow('收益㈢','0.076','gry','PE<small>(动)</small>','96.4','gry')
]);
fill('flows', [['净流入额',21,'-1632','-13%'],['大宗流入',16,'-1249','-10%'],['5日净流入额',24,'-1781','-2%'],['5日大宗流入',18,'-1403','-2%']].map(function (f) {
    return '<div class="flow"><b>' + f[0] + '</b><div class="bar" style="width:' + f[1] + 'px"></div><em>' + f[2] + '<small>万</small></em><em>' + f[3] + '</em></div>';
}));

var tickRows = [
    ['14:58','9.78',127,'B',8],['14:58','9.79',15,'B',2],['14:58','9.78',11,'S',1],['14:58','9.78',59,'S',3],['14:58','9.78',57,'S',3],['14:58','9.78',17,'S',3],
    ['14:58','9.78',165,'S',11],['14:58','9.78',22,'S',4],['14:58','9.78',34,'S',3],['14:58','9.79',32,'B',3],['14:58','9.78',149,'S',15],['14:58','9.79',65,'B',6],
    ['14:58','9.79',73,'B',6],['14:58','9.78',125,'S',12],['14:58','9.79',508,'B',37],['14:59','9.79',106,'B',18],['14:59','9.79',118,'S',9],['14:59','9.79',92,'S',7],
    ['14:59','9.79',103,'S',5],['14:59','9.79',39,'S',4],['14:59','9.80',63,'B',6],['14:59','9.79',180,'S',13],['14:59','9.79',247,'S',22],['14:59','9.79',50,'S',10],
    ['14:59','9.80',87,'B',13],['14:59','9.79',250,'S',21],['14:59','9.79',239,'S',24],['14:59','9.79',258,'S',13],['14:59','9.79',64,'S',10],['14:59','9.80',29,'B',4],
    ['14:59','9.80',24,'B',3],['14:59','9.80',203,'B',17],['14:59','9.80',235,'B',13],['14:59','9.80',67,'B',6],['14:59','9.80',98,'B',20],['15:00','9.80',5,'B',1]
];
fill('ticks', tickRows.map(function (t) {
    return '<div class="tick"><span class="t">' + t[0] + '</span><span class="p">' + t[1] + '</span><span class="v' + (t[2] >= 500 ? ' big-order' : '') + '">' + t[2] +
        '</span><span class="s ' + t[3] + '">' + t[3] + '</span><span class="n">' + t[4] + '</span></div>';
}));
```
